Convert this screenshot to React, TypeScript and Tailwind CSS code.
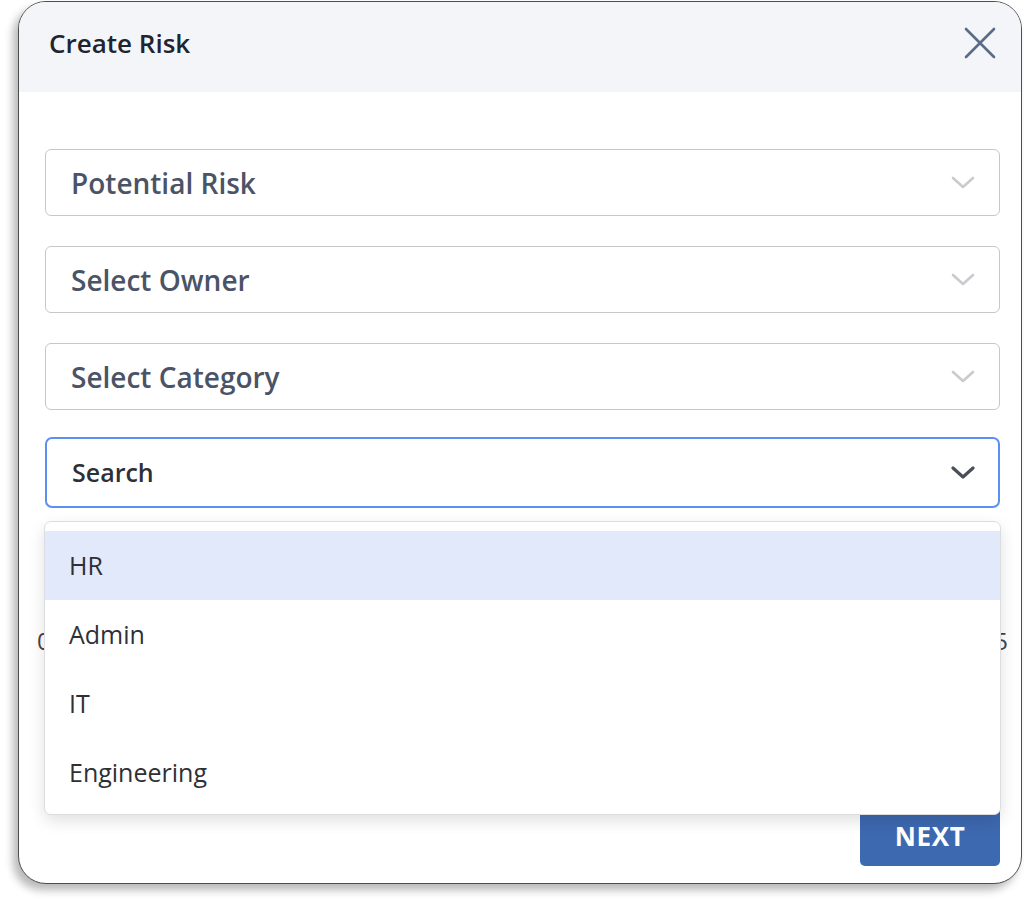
import React from "react";

const Chevron = ({ dark }: { dark?: boolean }) => (
  <svg width="24" height="14" viewBox="0 0 24 14" fill="none">
    <path
      d="M2 2 L12 11 L22 2"
      stroke={dark ? "#4a4f57" : "#c9cbcf"}
      strokeWidth={dark ? 3.2 : 2.6}
      strokeLinecap="round"
      strokeLinejoin="round"
    />
  </svg>
);

const Field = ({ label }: { label: string }) => (
  <div className="flex h-[67px] items-center justify-between rounded-[6px] border-[1.5px] border-[#c6c7ca] bg-white pl-[25px] pr-[24px]">
    <span className="text-[28px] font-semibold leading-none text-[#4b5366]">{label}</span>
    <Chevron />
  </div>
);

export default function App() {
  const items = ["HR", "Admin", "IT", "Engineering"];
  return (
    <div
      className="h-[899px] w-[1024px] bg-white pt-px"
      style={{ fontFamily: '"Open Sans", "Noto Sans", sans-serif' }}
    >
      <div className="relative ml-[18px] h-[883px] w-[1004px] overflow-hidden rounded-[28px] border-[1.5px] border-[#4d4d4d] bg-white shadow-[-5px_6px_9px_rgba(0,0,0,0.28)]">
        {/* Header */}
        <div className="flex h-[90px] items-center justify-between bg-[#f3f5f9] pl-[30px] pr-[24px]">
          <h1 className="-mt-[8px] text-[26px] font-semibold text-[#1f2430]">Create Risk</h1>
          <svg width="34" height="34" viewBox="0 0 34 34" fill="none" className="-mt-[8px]">
            <path d="M3 3 L31 31 M31 3 L3 31" stroke="#5a6b85" strokeWidth="2.6" strokeLinecap="round" />
          </svg>
        </div>

        {/* Body */}
        <div className="relative pl-[26px] pr-[21px] pt-[57px]">
          <div className="flex flex-col gap-[30px]">
            <Field label="Potential Risk" />
            <Field label="Select Owner" />
            <div className="-mb-[3px]">
              <Field label="Select Category" />
            </div>
            <div className="flex h-[71px] items-center justify-between rounded-[7px] border-2 border-[#5b8ff0] bg-white pl-[25px] pr-[23px]">
              <span className="text-[25px] font-semibold text-[#2e3035]">Search</span>
              <Chevron dark />
            </div>
          </div>

          {/* Slider behind dropdown */}
          <div className="mt-[91px] h-[2px] w-full bg-[#3c69b0]" />
          <div className="-ml-[8px] mr-[-8px] mt-[22px] flex justify-between text-[24px] text-[#444]">
            <span>0</span>
            <span>5</span>
          </div>

          {/* Footer button */}
          <div className="mt-[147px] flex justify-end">
            <button className="flex h-[60px] w-[140px] items-center justify-center rounded-[5px] bg-[#3d69b1] text-[26px] font-bold tracking-wide text-white">
              NEXT
            </button>
          </div>

          {/* Dropdown menu */}
          <div className="absolute left-[25px] top-[429px] w-[957px] rounded-[7px] border border-[#dcdde0] bg-white pb-[7px] pt-[9px] shadow-[0_6px_16px_rgba(0,0,0,0.12)]">
            {items.map((it, i) => (
              <div
                key={it}
                className={`flex h-[69px] items-center pl-[24px] text-[25px] text-[#2e3035] ${
                  i === 0 ? "bg-[#e1e9fb]" : ""
                }`}
              >
                {it}
              </div>
            ))}
          </div>
        </div>
      </div>
    </div>
  );
}
